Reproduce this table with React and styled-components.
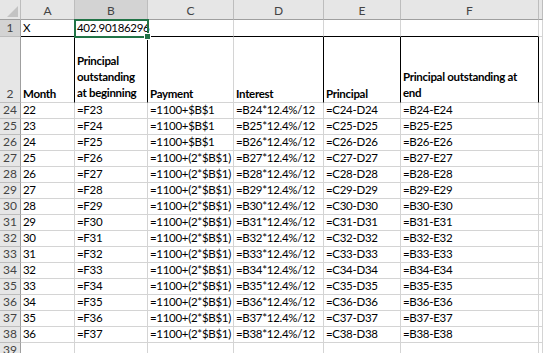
import React from "react";
import styled, { createGlobalStyle } from "styled-components";

const GlobalStyle = createGlobalStyle`
  html, body {
    margin: 0;
    padding: 0;
    background: #ffffff;
    overflow: hidden;
  }
`;

const columns = [
  { key: "A", width: 54 },
  { key: "B", width: 73 },
  { key: "C", width: 86 },
  { key: "D", width: 90 },
  { key: "E", width: 77 },
  { key: "F", width: 138 },
];

const Sheet = styled.div`
  display: grid;
  grid-template-columns: 21px ${columns.map((c) => c.width + "px").join(" ")} 1fr;
  grid-template-rows: 20px 17px 66px repeat(16, 16px);
  width: 543px;
  height: 353px;
  overflow: hidden;
  font-family: Lato, "Liberation Sans", sans-serif;
  font-size: 11.5px;
  letter-spacing: -0.3px;
  color: #000;
`;

const Corner = styled.div`
  position: relative;
  background: #e6e6e6;
  border-right: 1px solid #bdbdbd;
  border-bottom: 1px solid #9f9f9f;
  &::after {
    content: "";
    position: absolute;
    right: 2px;
    bottom: 2px;
    width: 0;
    height: 0;
    border-left: 11px solid transparent;
    border-bottom: 11px solid #c3c3c3;
  }
`;

const ColHead = styled.div`
  display: flex;
  align-items: center;
  justify-content: center;
  background: ${(p) => (p.$active ? "#d3d3d3" : "#e6e6e6")};
  border-right: 1px solid #bdbdbd;
  border-bottom: 1px solid #9f9f9f;
  color: #444;
  font-size: 12px;
  letter-spacing: 0;
  padding-top: 1px;
`;

const RowHead = styled.div`
  display: flex;
  align-items: flex-end;
  justify-content: center;
  background: ${(p) => (p.$active ? "#d3d3d3" : "#e6e6e6")};
  border-right: 1px solid #9f9f9f;
  border-bottom: 1px solid #bdbdbd;
  color: #444;
  font-size: 12px;
  letter-spacing: 0;
  line-height: 14px;
  padding-bottom: 1px;
`;

const Cell = styled.div`
  position: relative;
  display: flex;
  align-items: flex-end;
  padding: 0 0 1px 2px;
  line-height: 14px;
  white-space: nowrap;
  overflow: visible;
  font-weight: ${(p) => (p.$bold ? 700 : 400)};
  border-right: 1px solid ${(p) => (p.$edge ? "#000" : "#d4d4d4")};
  border-bottom: 1px solid ${(p) => (p.$underline ? "#000" : "#d4d4d4")};
  z-index: ${(p) => (p.$selected ? 2 : 1)};
  outline: ${(p) => (p.$selected ? "2px solid #217346" : "none")};
  outline-offset: -1px;
  &::after {
    content: "";
    display: ${(p) => (p.$selected ? "block" : "none")};
    position: absolute;
    right: -4px;
    bottom: -4px;
    width: 5px;
    height: 5px;
    background: #217346;
    border: 1px solid #fff;
  }
`;

const Lines = styled.span`
  display: block;
  line-height: 16px;
`;

const headerRow = {
  A: "Month",
  B: ["Principal", "outstanding", "at beginning"],
  C: "Payment",
  D: "Interest",
  E: "Principal",
  F: ["Principal outstanding at", "end"],
};

const blackEdges = ["A", "B", "D", "E", "F"];

function dataRow(r) {
  const month = r - 2;
  const pay = r <= 26 ? "=1100+$B$1" : "=1100+(2*$B$1)";
  return {
    A: String(month),
    B: `=F${r - 1}`,
    C: pay,
    D: `=B${r}*12.4%/12`,
    E: `=C${r}-D${r}`,
    F: `=B${r}-E${r}`,
  };
}

function App() {
  const dataRows = [];
  for (let r = 24; r <= 38; r++) dataRows.push(r);

  return (
    <>
      <GlobalStyle />
      <Sheet>
        <Corner />
        {columns.map((c) => (
          <ColHead key={c.key} $active={c.key === "B"}>
            {c.key}
          </ColHead>
        ))}
        <ColHead />

        <RowHead $active>1</RowHead>
        {columns.map((c) => (
          <Cell key={c.key} $underline $selected={c.key === "B"}>
            {c.key === "A" ? "X" : c.key === "B" ? "402.90186296" : ""}
          </Cell>
        ))}
        <Cell />

        <RowHead>2</RowHead>
        {columns.map((c) => {
          const v = headerRow[c.key];
          return (
            <Cell key={c.key} $bold $edge={blackEdges.includes(c.key)}>
              {Array.isArray(v) ? (
                <Lines>
                  {v.map((line, i) => (
                    <React.Fragment key={i}>
                      {line}
                      {i < v.length - 1 && <br />}
                    </React.Fragment>
                  ))}
                </Lines>
              ) : (
                v
              )}
            </Cell>
          );
        })}
        <Cell />

        {dataRows.map((r) => {
          const row = dataRow(r);
          return (
            <React.Fragment key={r}>
              <RowHead>{r}</RowHead>
              {columns.map((c) => (
                <Cell key={c.key}>{row[c.key]}</Cell>
              ))}
              <Cell />
            </React.Fragment>
          );
        })}

        <RowHead>39</RowHead>
        {columns.map((c) => (
          <Cell key={c.key} />
        ))}
        <Cell />
      </Sheet>
    </>
  );
}

export default App;
